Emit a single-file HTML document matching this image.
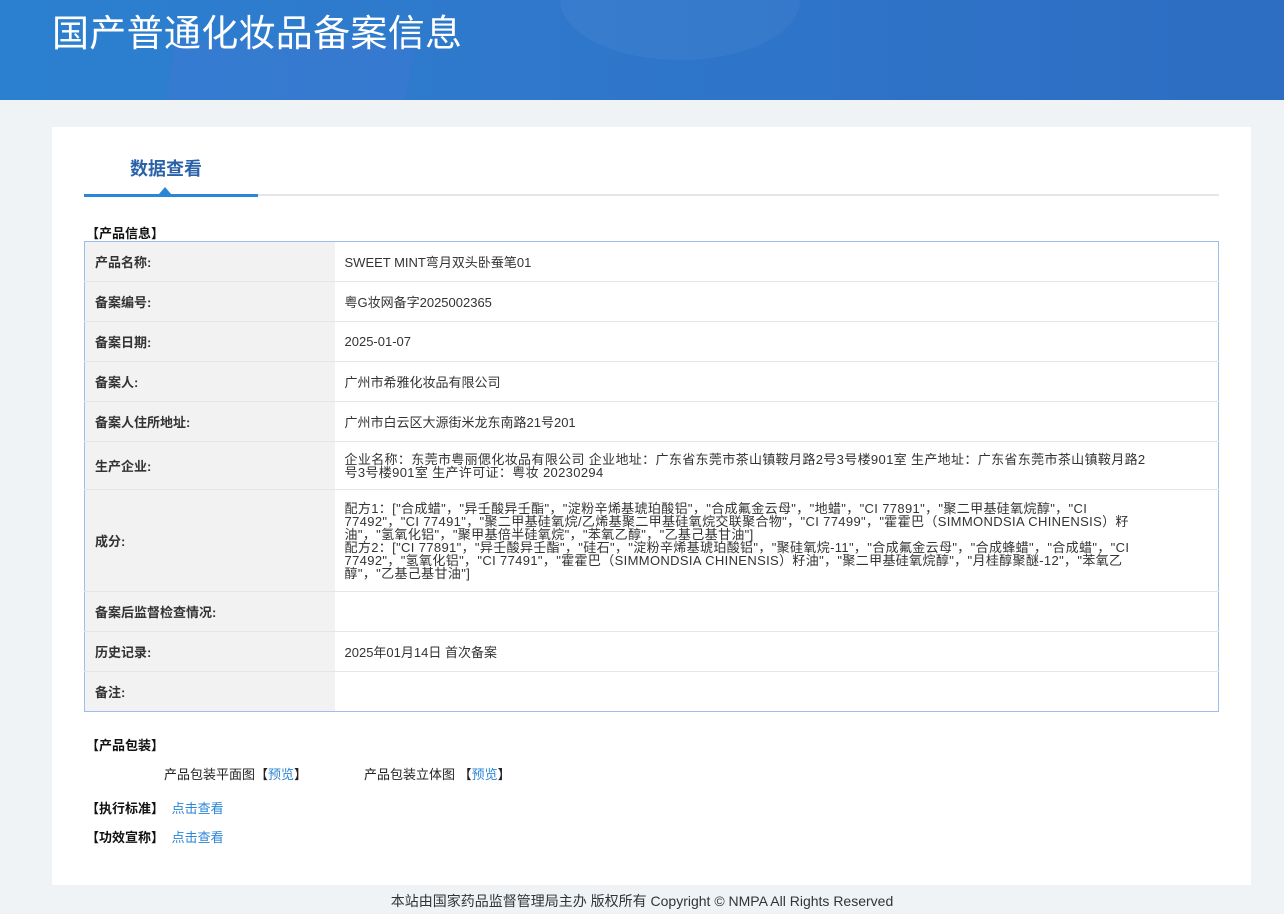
<!DOCTYPE html>
<html><head><meta charset="utf-8"><style>
*{margin:0;padding:0;box-sizing:border-box}
body{width:1284px;height:914px;background:#eff3f6;font-family:"Liberation Sans","Noto Sans CJK SC",sans-serif;position:relative;overflow:hidden;color:#333}
.hd{position:absolute;left:0;top:0;width:1284px;height:100px;background:linear-gradient(90deg,#2b80cf 0%,#2f78cc 40%,#2d6dc2 100%);overflow:hidden}
.hd h1{position:absolute;left:52px;top:3px;font-size:37px;font-weight:normal;color:#fff;letter-spacing:0.3px}
.card{position:absolute;left:52px;top:127px;width:1199px;height:758px;background:#fff}
.tab{position:absolute;left:78px;top:28px;font-size:18px;font-weight:bold;color:#2a62a8}
.line{position:absolute;left:32px;top:67px;width:1135px;height:2px;background:#e6e6e6}
.line2{position:absolute;left:32px;top:67px;width:174px;height:3px;background:#2a86d6}
.tri{position:absolute;left:107px;top:60px;width:0;height:0;border-left:6px solid transparent;border-right:6px solid transparent;border-bottom:7px solid #2a86d6}
.sec{position:absolute;font-size:13px;font-weight:bold;color:#111}
table{position:absolute;left:32px;top:114px;width:1135px;border-collapse:collapse;border:1px solid #9dbdee;font-size:13px}
td{border-bottom:1px solid #e6e6e6;padding:0 10px;height:40px;vertical-align:middle}
td.l{width:250px;background:#f2f2f2;font-weight:bold;color:#333}
td.v{color:#333;padding-right:60px}
.sm{line-height:13px;letter-spacing:0.35px}
a{color:#2a86d6;text-decoration:none}
.t{position:absolute;font-size:13px;color:#222}
.ft{position:absolute;left:0;top:891px;width:1284px;text-align:center;font-size:14px;color:#333}
</style></head><body>
<div class="hd">
<div style="position:absolute;left:170px;top:40px;width:240px;height:70px;background:rgba(80,120,220,.25);transform:skewX(-10deg)"></div>
<div style="position:absolute;left:560px;top:-60px;width:240px;height:120px;border-radius:50%;background:rgba(255,255,255,.04)"></div>
<h1>国产普通化妆品备案信息</h1>
</div>
<div class="card">
<div class="tab">数据查看</div>
<div class="line"></div><div class="line2"></div><div class="tri"></div>
<div class="sec" style="left:34px;top:96px">【产品信息】</div>
<table>
<tr><td class="l">产品名称:</td><td class="v">SWEET MINT弯月双头卧蚕笔01</td></tr>
<tr><td class="l">备案编号:</td><td class="v">粤G妆网备字2025002365</td></tr>
<tr><td class="l">备案日期:</td><td class="v">2025-01-07</td></tr>
<tr><td class="l">备案人:</td><td class="v">广州市希雅化妆品有限公司</td></tr>
<tr><td class="l">备案人住所地址:</td><td class="v">广州市白云区大源街米龙东南路21号201</td></tr>
<tr><td class="l" style="height:48px">生产企业:</td><td class="v sm">企业名称：东莞市粤丽偲化妆品有限公司 企业地址：广东省东莞市茶山镇鞍月路2号3号楼901室 生产地址：广东省东莞市茶山镇鞍月路2号3号楼901室 生产许可证：粤妆 20230294</td></tr>
<tr><td class="l" style="height:102px">成分:</td><td class="v sm">配方1：["合成蜡"，"异壬酸异壬酯"，"淀粉辛烯基琥珀酸铝"，"合成氟金云母"，"地蜡"，"CI 77891"，"聚二甲基硅氧烷醇"，"CI 77492"，"CI 77491"，"聚二甲基硅氧烷/乙烯基聚二甲基硅氧烷交联聚合物"，"CI 77499"，"霍霍巴（SIMMONDSIA CHINENSIS）籽油"，"氢氧化铝"，"聚甲基倍半硅氧烷"，"苯氧乙醇"，"乙基己基甘油"]<br>配方2：["CI 77891"，"异壬酸异壬酯"，"硅石"，"淀粉辛烯基琥珀酸铝"，"聚硅氧烷-11"，"合成氟金云母"，"合成蜂蜡"，"合成蜡"，"CI 77492"，"氢氧化铝"，"CI 77491"，"霍霍巴（SIMMONDSIA CHINENSIS）籽油"，"聚二甲基硅氧烷醇"，"月桂醇聚醚-12"，"苯氧乙醇"，"乙基己基甘油"]</td></tr>
<tr><td class="l">备案后监督检查情况:</td><td class="v"></td></tr>
<tr><td class="l">历史记录:</td><td class="v">2025年01月14日 首次备案</td></tr>
<tr><td class="l" style="border-bottom:none">备注:</td><td class="v" style="border-bottom:none"></td></tr>
</table>
<div class="sec" style="left:34px;top:608px">【产品包装】</div>
<div class="t" style="left:112px;top:637px">产品包装平面图【<a>预览</a>】</div>
<div class="t" style="left:312px;top:637px">产品包装立体图 【<a>预览</a>】</div>
<div class="sec" style="left:34px;top:671px">【执行标准】 <a style="font-weight:normal;margin-left:4px">点击查看</a></div>
<div class="sec" style="left:34px;top:700px">【功效宣称】 <a style="font-weight:normal;margin-left:4px">点击查看</a></div>
</div>
<div class="ft">本站由国家药品监督管理局主办 版权所有 Copyright © NMPA All Rights Reserved</div>
</body></html>
